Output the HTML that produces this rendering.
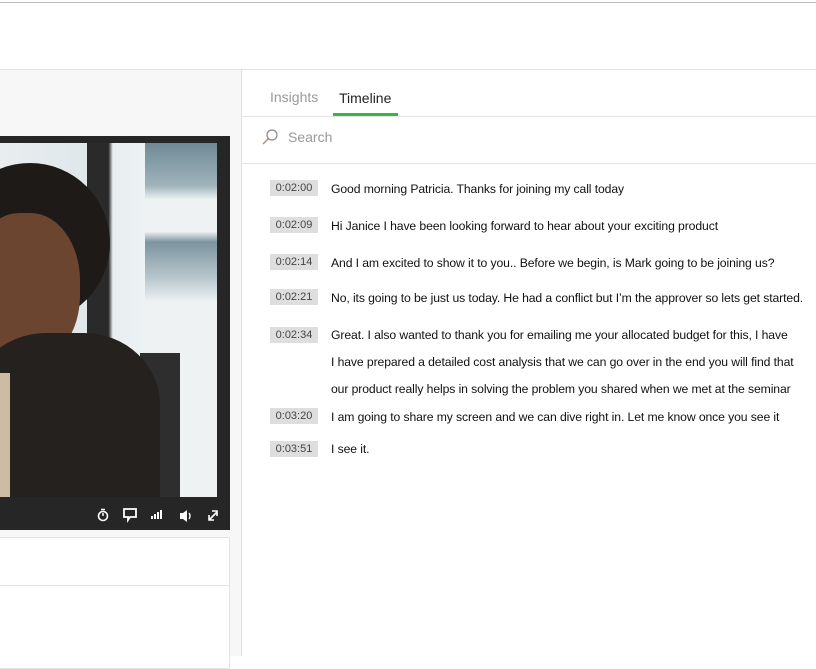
<!DOCTYPE html>
<html><head><style>
body{margin:0;width:816px;height:656px;overflow:hidden;background:#fff;font-family:"Liberation Sans",sans-serif;position:relative}
.a{position:absolute}
.ts{position:absolute;left:270px;width:48px;height:16px;background:#dedede;color:#444;font-size:11px;line-height:16px;text-align:center}
.tx{position:absolute;left:331px;font-size:12.2px;color:#111;line-height:16px;white-space:nowrap;letter-spacing:-0.1px}
</style></head><body>
<div class="a" style="left:0;top:2px;width:816px;height:1px;background:#bbb"></div>
<div class="a" style="left:0;top:69px;width:816px;height:1px;background:#e3e3e3"></div>
<div class="a" style="left:0;top:70px;width:241px;height:586px;background:#f7f7f7"></div>
<div class="a" style="left:241px;top:70px;width:1px;height:586px;background:#e3e3e3"></div>
<!-- video -->
<div class="a" style="left:0;top:136px;width:230px;height:394px;background:#262626"></div>
<div class="a" style="left:0;top:143px;width:217px;height:354px;background:linear-gradient(90deg,#e8eef0 0%,#dfe7ea 40%,#2a2a2a 40%,#2a2a2a 50%,#e9eff1 52%,#f2f5f6 100%);overflow:hidden">
 <div class="a" style="left:145px;top:0;width:72px;height:354px;background:linear-gradient(180deg,#6f8a95 0,#9fb3bb 12%,#eef2f3 16%,#eef2f3 25%,#7c949e 28%,#b7c6cc 38%,#eef2f3 45%,#eef2f3 100%)"></div>
 <div class="a" style="left:140px;top:210px;width:40px;height:144px;background:#2e2e2e"></div>
 <div class="a" style="left:-50px;top:20px;width:160px;height:160px;border-radius:50%;background:#1e1a17"></div>
 <div class="a" style="left:-30px;top:70px;width:110px;height:150px;border-radius:45%;background:#6b4530"></div>
 <div class="a" style="left:-30px;top:190px;width:190px;height:180px;border-radius:40% 40% 0 0;background:#25211e"></div>
 <div class="a" style="left:-10px;top:230px;width:20px;height:124px;background:#cdbba3"></div>
</div>
<svg class="a" style="left:95px;top:506px" width="130" height="18" viewBox="0 0 130 18" fill="#fff" stroke="#fff">
 <circle cx="8" cy="10" r="4.5" fill="none" stroke-width="1.6"/><path d="M6 3.5h4M8 7v3" stroke-width="1.5"/>
 <path d="M29 3h12v8h-6l-2 3v-3h-4z" fill="none" stroke-width="1.8"/>
 <path d="M57 13v-3M60 13v-5M63 13v-7M66 13v-9" stroke-width="2"/>
 <path d="M85 7h3l4-3v12l-4-3h-3z" stroke="none"/><path d="M94 7q2 3 0 6" fill="none" stroke-width="1.4"/>
 <path d="M114 14l8-8M117 5h5v5M114 9v5h5" fill="none" stroke-width="1.6"/>
</svg>
<!-- card -->
<div class="a" style="left:-1px;top:537px;width:229px;height:130px;background:#fff;border:1px solid #e3e3e3;border-radius:2px"></div>
<div class="a" style="left:0;top:585px;width:229px;height:1px;background:#e3e3e3"></div>
<!-- right -->
<div class="a" style="left:270px;top:89px;font-size:14px;color:#999">Insights</div>
<div class="a" style="left:339px;top:90px;font-size:14px;color:#222">Timeline</div>
<div class="a" style="left:333px;top:113px;width:65px;height:3px;background:#3ab54a"></div>
<div class="a" style="left:242px;top:116px;width:574px;height:1px;background:#e3e3e3"></div>
<svg class="a" style="left:261px;top:128px" width="18" height="18" viewBox="0 0 18 18"><circle cx="11" cy="7" r="5" fill="none" stroke="#888" stroke-width="1.2"/><path d="M7.5 10.5L2 16" stroke="#a87" stroke-width="1.3"/></svg>
<div class="a" style="left:288px;top:129px;font-size:14px;color:#999">Search</div>
<div class="a" style="left:242px;top:163px;width:574px;height:1px;background:#e3e3e3"></div>
<div class="ts" style="top:180px">0:02:00</div><div class="tx" style="top:181px">Good morning Patricia. Thanks for joining my call today</div>
<div class="ts" style="top:217px">0:02:09</div><div class="tx" style="top:218px">Hi Janice I have been looking forward to hear about your exciting product</div>
<div class="ts" style="top:254px">0:02:14</div><div class="tx" style="top:255px">And I am excited to show it to you.. Before we begin, is Mark going to be joining us?</div>
<div class="ts" style="top:289px">0:02:21</div><div class="tx" style="top:290px">No, its going to be just us today. He had a conflict but I’m the approver so lets get started.</div>
<div class="ts" style="top:327px">0:02:34</div><div class="tx" style="top:327px">Great. I also wanted to thank you for emailing me your allocated budget for this, I have</div>
<div class="tx" style="top:354px">I have prepared a detailed cost analysis that we can go over in the end you will find that</div>
<div class="tx" style="top:381px">our product really helps in solving the problem you shared when we met at the seminar</div>
<div class="ts" style="top:408px">0:03:20</div><div class="tx" style="top:409px">I am going to share my screen and we can dive right in. Let me know once you see it</div>
<div class="ts" style="top:441px">0:03:51</div><div class="tx" style="top:441px">I see it.</div>
</body></html>
